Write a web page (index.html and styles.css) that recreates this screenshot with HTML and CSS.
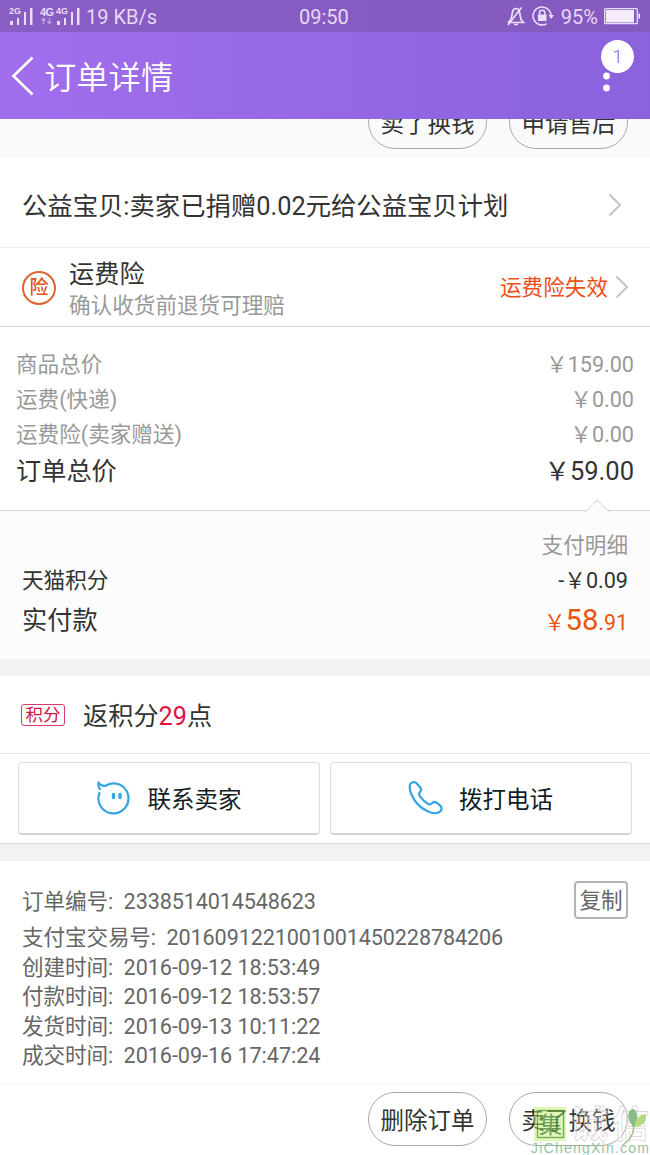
FILE: index.html
```html
<!DOCTYPE html>
<html lang="zh-CN">
<head>
<meta charset="utf-8">
<title>订单详情</title>
<link rel="stylesheet" href="styles.css">
</head>
<body>
<div class="screen">
  <div class="status">
    <svg class="signals" width="82" height="32" viewBox="0 0 82 32" fill="#e9dcf7">
      <text class="net" x="9" y="14" textLength="12">2G</text>
      <path d="M10 21h3v4h-3zM17 18h2v7h-2zM24 12h2v13h-2zM30 8h2.500v17h-2.500z"/>
      <text class="net net-large" x="40" y="16" textLength="14">4G</text>
      <text class="net" x="56" y="14" textLength="12">4G</text>
      <path d="M57 21h3v4h-3zM64 18h2v7h-2zM71 12h2v13h-2zM77 8h2.500v17h-2.500z"/>
      <path d="M43.500 24v-5.500m-2 2l2-2 2 2M49.500 18v5.500m-2-2l2 2 2-2" fill="none" stroke="#bd9fe2" stroke-width="1.300"/>
    </svg>
    <span class="speed">19 KB/s</span>
    <span class="clock">09:50</span>
    <svg class="bell" width="18" height="20" viewBox="0 0 18 20" fill="none" stroke="#eadef8" stroke-width="1.700">
      <path d="M1 16.500h15.500L14 13.500 12.500 6C12 3.500 10.500 2.500 9 2.500S6 3.500 5.500 6L4 13.500 1 16.500M14.500 1.500L1 19M7 18.500h4"/>
    </svg>
    <svg class="lock" width="22" height="20" viewBox="0 0 22 20" fill="none" stroke="#eadef8" stroke-width="1.500">
      <path d="M19 9A9 9 0 1 0 14.500 17.800"/>
      <path d="M16.500 9h5.500l-2.800 4z" fill="#eadef8" stroke="none"/>
      <path d="M6 8.500h8.500v6.500H6z" fill="#eadef8" stroke="none"/>
      <path d="M7.500 9V7a2.700 2.700 0 0 1 5.400 0v2"/>
    </svg>
    <span class="percent">95%</span>
    <svg class="battery" width="37" height="17" viewBox="0 0 37 17">
      <rect x=".7" y=".7" width="32.600" height="15" rx="1" fill="none" stroke="#eadef8" stroke-width="1.300"/>
      <path d="M2 2h28v12.500h-28zM34.500 5.500h1.500v5h-1.500z" fill="#f4ecfb"/>
    </svg>
  </div>

  <div class="header">
    <svg class="back" width="24" height="40" viewBox="0 0 24 40" fill="none" stroke="#fff" stroke-width="2.600"><path d="M21.500 1.500L2.500 20l19 18.500"/></svg>
    <h1 class="title">订单详情</h1>
    <svg class="more" width="9" height="40" viewBox="0 0 9 40" fill="#fff"><circle cx="4.500" cy="7" r="3.400"/><circle cx="4.500" cy="20" r="3.400"/><circle cx="4.500" cy="32" r="3.400"/></svg>
    <span class="badge">1</span>
  </div>

  <div class="strip">
    <span class="pill">卖了换钱</span>
    <span class="pill">申请售后</span>
  </div>

  <div class="charity">
    <span class="charity-text">公益宝贝:卖家已捐赠0.02元给公益宝贝计划</span>
    <svg class="chevron" width="14" height="24" viewBox="0 0 14 24"><path d="M1.500 1.500L12 12 1.500 22.500"/></svg>
  </div>

  <div class="insurance">
    <span class="ins-icon">险</span>
    <div class="ins-text">
      <div class="ins-name">运费险</div>
      <div class="ins-note">确认收货前退货可理赔</div>
    </div>
    <span class="ins-state">运费险失效</span>
    <svg class="chevron" width="14" height="24" viewBox="0 0 14 24"><path d="M1.500 1.500L12 12 1.500 22.500"/></svg>
  </div>

  <div class="prices">
    <div class="price"><span>商品总价</span><span>￥159.00</span></div>
    <div class="price"><span>运费(快递)</span><span>￥0.00</span></div>
    <div class="price"><span>运费险(卖家赠送)</span><span>￥0.00</span></div>
    <div class="price total"><span>订单总价</span><span class="sum">￥59.00</span></div>
  </div>

  <div class="payment">
    <svg class="notch" width="24" height="13" viewBox="0 0 24 13"><path d="M0 13L1.500 11.500 12 1l10.500 10.500L24 13" fill="#fcfcfc" stroke="#d6d6d6" stroke-width="1"/></svg>
    <div class="pay-head">支付明细</div>
    <div class="pay-row"><span>天猫积分</span><span>-￥0.09</span></div>
    <div class="pay-row paid"><span>实付款</span><span class="amount">￥<b class="whole">58</b>.91</span></div>
  </div>
  <div class="gap"></div>

  <div class="points">
    <span class="tag">积分</span>
    <span class="reward">返积分<em class="count">29</em>点</span>
  </div>

  <div class="contacts">
    <div class="contact">
      <svg class="contact-icon" width="36" height="34" viewBox="0 0 36 34" fill="none" stroke="#36a4e4" stroke-width="2.200">
        <path d="M3.800 11.200A15 15 0 1 0 9 5C6.800 5 4.300 4 2.600 1.800 2 4.200 2.600 7 4.600 8.800"/>
        <path d="M17.500 13.500v3M24 13.500v3" stroke-width="3.400" stroke-linecap="round"/>
      </svg>
      <span class="contact-text">联系卖家</span>
    </div>
    <div class="contact">
      <svg class="contact-icon" width="35" height="34" viewBox="0 0 34 34" fill="none" stroke="#36a4e4" stroke-width="2.200" stroke-linejoin="round">
        <path d="M2 2.800C4 .8 6.800.6 8.300 2.500L12.300 7.300C13.500 9 12.500 10 11 11.700C10 13 10.600 14.300 12 16.200C14.500 19.500 17 21.400 19.800 23C21.500 24 22.400 23.400 23.800 22C25.200 20.700 26.400 20.600 28 21.700L32 24.800C33.400 26.500 33.200 28.700 32 30.200C29 33 24.500 32.800 19 30.300C12 27 5.500 20 2.500 12.500C1.100 8.500.8 4.800 2 2.800Z"/>
      </svg>
      <span class="contact-text">拨打电话</span>
    </div>
  </div>
  <div class="gap"></div>

  <div class="order">
    <div class="order-line first"><span class="label">订单编号:</span><span>2338514014548623</span><span class="copy">复制</span></div>
    <div class="order-line"><span class="label">支付宝交易号:</span><span>2016091221001001450228784206</span></div>
    <div class="order-line"><span class="label">创建时间:</span><span class="date">2016-09-12 18:53:49</span></div>
    <div class="order-line"><span class="label">付款时间:</span><span class="date">2016-09-12 18:53:57</span></div>
    <div class="order-line"><span class="label">发货时间:</span><span class="date">2016-09-13 10:11:22</span></div>
    <div class="order-line"><span class="label">成交时间:</span><span class="date">2016-09-16 17:47:24</span></div>
  </div>

  <div class="footer">
    <span class="pill">删除订单</span>
    <span class="pill">卖了换钱</span>
  </div>

  <svg class="watermark" width="125" height="60" viewBox="0 0 125 60">
    <rect x="9" y="12" width="32" height="34" fill="#b9ee60" opacity=".45"/>
    <rect x="12.500" y="15.500" width="26" height="27" fill="none" stroke="#498334" stroke-width="1.300" opacity=".7"/>
    <text class="seal" x="14" y="38">集</text>
    <text class="mark" x="46" y="43" textLength="78">诚信</text>
    <path d="M98 50C106 44 110 36 108 28" fill="none" stroke="#a3bd8d" stroke-width="1.500"/>
    <path d="M109 32C101 26 102 14 108 14C113 15 114 24 109 32Z" fill="#74b574" opacity=".85"/>
    <path d="M109 32C110 22 118 18 121 20C122 27 117 32 109 32Z" fill="#acd66c" opacity=".85"/>
    <text class="site" x="6" y="58" textLength="118">JiChengXin.com</text>
  </svg>
</div>
</body>
</html>
```

FILE: styles.css
```css
* { box-sizing: border-box; }
body { margin: 0; }
h1, em, b { margin: 0; font-weight: inherit; font-style: normal; }
svg { display: block; flex: none; }

.screen {
  position: relative;
  width: 650px;
  height: 1155px;
  overflow: hidden;
  background: #fff;
  color: #333;
  font: 25.2px/36px Roboto, "Noto Sans CJK SC", sans-serif;
  white-space: nowrap;
}

.status {
  position: relative;
  display: flex;
  align-items: center;
  height: 32px;
  background: linear-gradient(90deg, #885dc4, #845abf);
  color: #e6d8f5;
  font-size: 20px;
}
.net { font: bold 9px "Liberation Sans", sans-serif; }
.net-large { font-size: 11px; }
.speed { margin: 2px 0 0 4px; }
.clock { position: absolute; left: 299px; top: -1px; }
.bell { margin-left: auto; }
.lock { margin-left: 7px; }
.percent { margin: 1px 0 0 7px; }
.battery { margin: 0 9px 0 6px; }

.header {
  position: relative;
  display: flex;
  align-items: center;
  height: 87px;
  padding: 0 39px 0 11px;
  background: linear-gradient(90deg, #a16eee, #8962dc);
  color: #fff;
}
.title { margin: -2px 0 0 9px; font-family: "Noto Sans CJK SC DemiLight", "Noto Sans CJK SC", sans-serif; font-size: 32.3px; font-weight: 350; }
.more { margin: 1px 0 0 auto; }
.badge {
  position: absolute;
  right: 16px;
  top: 8px;
  width: 33px;
  height: 33px;
  border-radius: 50%;
  background: #fff;
  color: #8b64d8;
  font-size: 19px;
  font-weight: 300;
  line-height: 33px;
  text-align: center;
}

.strip, .footer { display: flex; justify-content: flex-end; gap: 22px; padding-right: 22px; }
.strip { height: 39px; align-items: flex-end; padding-bottom: 9px; background: #fafafa; overflow: hidden; }
.pill {
  flex: none;
  width: 119px;
  height: 54px;
  border: 1px solid #a9a9a9;
  border-radius: 27px;
  background: #fff;
  font-size: 23.5px;
  line-height: 56px;
  text-align: center;
}
.strip .pill { background: none; }

.charity { display: flex; align-items: center; justify-content: space-between; height: 90px; padding: 4px 28px 0 22px; border-bottom: 1px solid #eee; }
.charity-text { margin-top: 2px; font-size: 25.35px; }
.chevron { fill: none; stroke: #c6c6c6; stroke-width: 2.2; }

.insurance { display: flex; align-items: center; height: 79px; padding: 0 21px 0 22px; border-bottom: 1px solid #d4d4d4; }
.ins-icon { width: 34px; height: 34px; margin-top: 1px; border: 2px solid #de6331; border-radius: 50%; color: #de5522; font-size: 19px; font-weight: 500; line-height: 30px; text-align: center; }
.ins-text { margin: 6px 0 0 13px; line-height: 31px; }
.ins-note { color: #999; font-size: 21.6px; }
.ins-state { margin: 2px 7px 0 auto; color: #ee4f16; font-size: 21.6px; }

.prices { height: 183px; padding: 20px 16px 0; }
.price { display: flex; justify-content: space-between; color: #999; font-size: 21.6px; line-height: 35px; }
.total { color: #333; font-size: 25.2px; line-height: 40px; }
.sum { margin-top: -1px; font-size: 25.5px; }

.payment { position: relative; height: 149px; padding: 17px 22px 0; border-top: 1px solid #d4d4d4; background: #fcfcfc; font-size: 21.6px; line-height: 35px; }
.notch { position: absolute; right: 41px; top: -12px; }
.pay-head { color: #999; text-align: right; }
.pay-row { display: flex; justify-content: space-between; }
.paid { font-size: 25.2px; line-height: 45px; }
.amount { color: #e95513; font-size: 21.4px; }
.whole { font-size: 29.2px; }

.gap { height: 17px; background: #f2f2f2; }

.points { display: flex; align-items: center; height: 78px; padding: 0 21px; border-bottom: 1px solid #e8e8e8; }
.tag { width: 44px; height: 22px; margin-right: 18px; border: 1px solid #d63d66; border-radius: 3px; color: #d01845; font-size: 17.5px; line-height: 20px; text-align: center; }
.reward { margin-top: 4px; }
.count { color: #de113f; }

.contacts { display: flex; gap: 10px; height: 90px; padding: 8px 18px 0; border-bottom: 1px solid #d8d8d8; }
.contact { display: flex; flex: 1; align-items: center; justify-content: center; height: 73px; padding-right: 1px; border: 1px solid #dedede; border-bottom: 2px solid #d4d4d4; border-radius: 4px; color: #111c24; font-size: 23.5px; }
.contact-icon { margin-right: 16px; }
.contact-text { margin-top: 4px; }

.order { height: 223px; padding: 21px 22px 0; border-bottom: 1px solid #f8f8f8; color: #666; font-size: 21.6px; line-height: 29.6px; letter-spacing: -.12px; }
.order-line { display: flex; align-items: center; }
.first { height: 41px; padding-bottom: 2px; }
.label { margin-right: 10.6px; }
.date { letter-spacing: -.05px; }
.copy { width: 54px; height: 38px; margin: -3px 0 0 auto; border: 2px solid #b4b4b4; border-radius: 4px; line-height: 35px; text-align: center; }

.footer { padding-top: 8px; }

.watermark { position: absolute; right: 0; bottom: 0; }
.seal { font: 23px "Noto Sans CJK SC", sans-serif; fill: #3c7730; opacity: .7; }
.mark { font: bold 37px "Noto Sans CJK SC", sans-serif; fill: #fff; fill-opacity: .25; stroke: #d8d0d4; stroke-width: .7; }
.site { font: 14px "Liberation Sans", sans-serif; fill: #93c4a2; }
```
